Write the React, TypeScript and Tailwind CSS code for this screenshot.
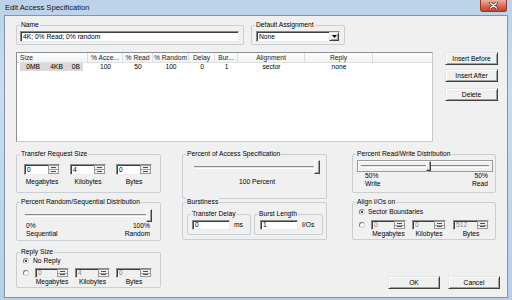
import React from "react";

function Group({ label, className, children }: { label: string; className?: string; children?: React.ReactNode }) {
  return (
    <div className={"border border-[#c9ced3] rounded-[2px] flex flex-col shrink-0 " + (className ?? "")}>
      <div className="-mt-[5px] ml-[3px] px-[1px] bg-[#f0f0f0] w-fit h-[8px] leading-[8px] whitespace-nowrap">{label}</div>
      {children}
    </div>
  );
}

const sunken =
  "border border-t-[#8a8a8a] border-l-[#8a8a8a] border-r-[#ececec] border-b-[#ececec] shadow-[inset_1px_1px_0_#404040]";
const raised =
  "bg-[#f0f0f0] border border-t-[#e6e6e6] border-l-[#e6e6e6] border-r-[#404040] border-b-[#404040] shadow-[inset_1px_1px_0_#ffffff,inset_-1px_-1px_0_#a0a0a0]";

function Spin({ value, className, disabled }: { value: string; className: string; disabled?: boolean }) {
  return (
    <div className={"flex items-stretch " + sunken + " " + (disabled ? "bg-[#f0f0f0] text-[#8a8a8a] " : "bg-white ") + className}>
      <div className="flex-1 pl-[2px] flex items-center leading-[8px]">{value}</div>
      <div className="w-[11px] flex flex-col border border-[#9a9a9a] bg-[#f0f0f0]">
        <div className="flex-1 flex items-center justify-center border-b border-[#9a9a9a]">
          <div className="w-[5px] h-[1px] bg-[#505050]" />
        </div>
        <div className="flex-1 flex items-center justify-center">
          <div className="w-[5px] h-[1px] bg-[#505050]" />
        </div>
      </div>
    </div>
  );
}

function Radio({ checked }: { checked?: boolean }) {
  return (
    <div className="w-[6px] h-[6px] rounded-full border border-[#7a7a7a] border-r-[#d0d0d0] border-b-[#d0d0d0] bg-white flex items-center justify-center shrink-0">
      {checked && <div className="w-[2px] h-[2px] rounded-full bg-black" />}
    </div>
  );
}

function Track({ className }: { className?: string }) {
  return <div className={"h-[3px] bg-[#e4e4e4] border-t border-b border-[#8a8a8a] border-b-white " + (className ?? "")} />;
}

function Thumb({ className }: { className: string }) {
  return (
    <div
      className={
        "shrink-0 bg-[#f0f0f0] border border-t-white border-l-white border-r-[#404040] border-b-[#404040] shadow-[inset_-1px_-1px_0_#a0a0a0] " +
        className
      }
    />
  );
}

function Btn({ children, className }: { children: React.ReactNode; className?: string }) {
  return (
    <div className={"flex items-center justify-center h-[13px] leading-[8px] " + raised + " " + (className ?? "")}>
      {children}
    </div>
  );
}

const headers: { t: string; w: string; left?: boolean }[] = [
  { t: "Size", w: "w-[71px]", left: true },
  { t: "% Acce...", w: "w-[35px]" },
  { t: "% Read", w: "w-[30px]" },
  { t: "% Random", w: "w-[36px]" },
  { t: "Delay", w: "w-[26px]" },
  { t: "Bur...", w: "w-[23px]" },
  { t: "Alignment", w: "w-[67px]" },
  { t: "Reply", w: "w-[68px]" },
];

export default function App() {
  return (
    <div className="w-[512px] h-[300px] overflow-hidden flex flex-col px-[4px] pb-[2px] bg-[linear-gradient(180deg,#bcd2ea_0%,#c9dcf0_30%,#b7cfe9_100%)] font-['Liberation_Sans',Arial,sans-serif] text-[6.7px] leading-[8px] text-black">
      {/* Title bar */}
      <div className="h-[15px] flex items-start shrink-0 -mx-[4px]">
        <div className="ml-[5px] mt-[3px] text-[7.6px] leading-[10px] text-[#111]">Edit Access Specification</div>
        <div className="ml-auto mr-[5px] w-[27px] h-[12px] rounded-b-[3px] border border-t-0 border-[#8c3a2c] bg-[linear-gradient(180deg,#eab0a2_0%,#d9715c_50%,#c4412a_100%)] flex items-center justify-center">
          <svg width="9" height="7" viewBox="0 0 9 7">
            <path d="M1.5 1 L7.5 6 M7.5 1 L1.5 6" stroke="#4b1b12" strokeWidth="2.6" strokeLinecap="round" />
            <path d="M1.5 1 L7.5 6 M7.5 1 L1.5 6" stroke="#ffffff" strokeWidth="1.4" strokeLinecap="round" />
          </svg>
        </div>
      </div>

      {/* Client */}
      <div className="flex-1 bg-[#f0f0f0] border border-[#7f94ad] flex flex-col pl-[11px]">
        {/* Row 1 */}
        <div className="flex mt-[9px]">
          <Group label="Name" className="w-[228px] h-[20px]">
            <div className={"ml-[3px] mt-[2px] w-[219px] h-[11px] bg-white flex items-center pl-[2px] " + sunken}>
              4K; 0% Read; 0% random
            </div>
          </Group>
          <Group label="Default Assignment" className="ml-[7px] w-[94px] h-[20px]">
            <div className={"ml-[4px] mt-[2px] w-[84px] h-[11px] bg-white flex items-center " + sunken}>
              <span className="flex-1 pl-[2px]">None</span>
              <div className={"w-[10px] h-[9px] flex items-center justify-center " + raised}>
                <svg width="5" height="3" viewBox="0 0 5 3">
                  <path d="M0 0h5L2.5 3z" fill="#000" />
                </svg>
              </div>
            </div>
          </Group>
        </div>

        {/* Row 2 */}
        <div className="flex mt-[7px]">
          <div className="w-[417px] h-[90px] bg-white border border-[#8a8f96] border-r-[#c8c8c8] border-b-[#c8c8c8] flex flex-col">
            <div className="flex h-[10px] border-b border-[#e0e0e0] bg-[linear-gradient(180deg,#ffffff,#f1f2f4)]">
              {headers.map((h) => (
                <div
                  key={h.t}
                  className={
                    h.w +
                    " border-r border-[#dcdcdc] flex items-center whitespace-nowrap overflow-hidden text-[#222] " +
                    (h.left ? "pl-[3px]" : "justify-center")
                  }
                >
                  {h.t}
                </div>
              ))}
              <div className="flex-1" />
            </div>
            <div className="flex h-[8px] items-center">
              <div className="w-[71px] flex">
                <div className="ml-[3px] w-[63px] h-[8px] bg-[#d9d9d9] flex items-center">
                  <span className="w-[20px] text-right">0MB</span>
                  <span className="w-[23px] text-right">4KB</span>
                  <span className="w-[17px] text-right">0B</span>
                </div>
              </div>
              <div className="w-[35px] text-center">100</div>
              <div className="w-[30px] text-center">50</div>
              <div className="w-[36px] text-center">100</div>
              <div className="w-[26px] text-center">0</div>
              <div className="w-[23px] text-center">1</div>
              <div className="w-[67px] text-center">sector</div>
              <div className="w-[68px] text-center">none</div>
            </div>
          </div>
          <div className="ml-[12px] w-[53px] flex flex-col">
            <Btn>Insert Before</Btn>
            <Btn className="mt-[4px]">Insert After</Btn>
            <Btn className="mt-[6px]">Delete</Btn>
          </div>
        </div>

        {/* Row 3 */}
        <div className="flex items-start mt-[12px]">
          {/* Column 1 */}
          <div className="w-[145px] flex flex-col">
            <Group label="Transfer Request Size" className="h-[39px]">
              <div className="flex ml-[7px] mt-[6px] gap-[10px]">
                {["0", "4", "0"].map((v, i) => (
                  <div key={i} className="w-[36px] flex flex-col items-center">
                    <Spin value={v} className="w-[36px] h-[11px]" />
                    <div className="mt-[3px] whitespace-nowrap">{["Megabytes", "Kilobytes", "Bytes"][i]}</div>
                  </div>
                ))}
              </div>
            </Group>
            <Group label="Percent Random/Sequential Distribution" className="mt-[9px] h-[39px]">
              <div className="ml-[8px] mt-[3px] w-[127px] h-[13px] flex items-center">
                <Track className="flex-1" />
                <Thumb className="w-[6px] h-[13px]" />
              </div>
              <div className="ml-[9px] w-[124px] flex justify-between">
                <div className="flex flex-col">
                  <span>0%</span>
                  <span>Sequential</span>
                </div>
                <div className="flex flex-col items-end">
                  <span>100%</span>
                  <span>Random</span>
                </div>
              </div>
            </Group>
            <Group label="Reply Size" className="mt-[11px] h-[36px]">
              <div className="ml-[6px] mt-[1px] h-[8px] flex items-center gap-[4px]">
                <Radio checked />
                <span>No Reply</span>
              </div>
              <div className="ml-[6px] mt-[3px] flex items-start">
                <div className="h-[10px] flex items-center">
                  <Radio />
                </div>
                <div className="ml-[6px] w-[34px] flex flex-col items-center">
                  <Spin value="0" disabled className="w-[34px] h-[10px]" />
                  <div className="whitespace-nowrap">Megabytes</div>
                </div>
                <div className="ml-[6px] w-[35px] flex flex-col items-center">
                  <Spin value="4" disabled className="w-[35px] h-[10px]" />
                  <div className="whitespace-nowrap">Kilobytes</div>
                </div>
                <div className="ml-[6px] w-[36px] flex flex-col items-center">
                  <Spin value="0" disabled className="w-[36px] h-[10px]" />
                  <div className="whitespace-nowrap">Bytes</div>
                </div>
              </div>
            </Group>
          </div>

          {/* Column 2 */}
          <div className="ml-[21px] w-[145px] flex flex-col">
            <Group label="Percent of Access Specification" className="h-[45px]">
              <div className="ml-[11px] mt-[2px] w-[126px] h-[14px] flex items-center">
                <Track className="flex-1" />
                <Thumb className="w-[6px] h-[14px]" />
              </div>
              <div className="ml-[11px] mt-[4px] w-[126px] text-center">100 Percent</div>
            </Group>
            <Group label="Burstiness" className="mt-[3px] h-[38px]">
              <div className="ml-[4px] mt-[8px] flex gap-[3px]">
                <Group label="Transfer Delay" className="w-[64px] h-[21px]">
                  <div className="mt-[2px] flex items-center">
                    <div className={"ml-[4px] w-[38px] h-[10px] bg-white flex items-center pl-[2px] " + sunken}>0</div>
                    <span className="ml-[4px]">ms</span>
                  </div>
                </Group>
                <Group label="Burst Length" className="w-[69px] h-[21px]">
                  <div className="mt-[2px] flex items-center">
                    <div className={"ml-[5px] w-[38px] h-[10px] bg-white flex items-center pl-[2px] " + sunken}>1</div>
                    <span className="ml-[4px]">I/Os</span>
                  </div>
                </Group>
              </div>
            </Group>
          </div>

          {/* Column 3 */}
          <div className="ml-[25px] w-[148px] flex flex-col">
            <Group label="Percent Read/Write Distribution" className="w-[144px] h-[39px]">
              <div className="ml-[4px] mt-[2px] w-[136px] h-[12px] border border-[#9a9a9a] shadow-[inset_1px_1px_0_#ffffff] flex items-center px-[3px]">
                <Track className="w-[65px]" />
                <Thumb className="w-[5px] h-[10px]" />
                <Track className="flex-1" />
              </div>
              <div className="ml-[12px] w-[123px] flex justify-between">
                <div className="flex flex-col">
                  <span>50%</span>
                  <span>Write</span>
                </div>
                <div className="flex flex-col items-end">
                  <span>50%</span>
                  <span>Read</span>
                </div>
              </div>
            </Group>
            <Group label="Align I/Os on" className="mt-[9px] w-[144px] h-[38px]">
              <div className="ml-[6px] mt-[2px] h-[8px] flex items-center gap-[3px]">
                <Radio checked />
                <span>Sector Boundaries</span>
              </div>
              <div className="ml-[6px] mt-[4px] flex items-start">
                <div className="h-[10px] flex items-center">
                  <Radio />
                </div>
                <div className="ml-[6px] w-[35px] flex flex-col items-center">
                  <Spin value="0" disabled className="w-[35px] h-[10px]" />
                  <div className="whitespace-nowrap">Megabytes</div>
                </div>
                <div className="ml-[6px] w-[34px] flex flex-col items-center">
                  <Spin value="0" disabled className="w-[34px] h-[10px]" />
                  <div className="whitespace-nowrap">Kilobytes</div>
                </div>
                <div className="ml-[7px] w-[36px] flex flex-col items-center">
                  <Spin value="512" disabled className="w-[36px] h-[10px]" />
                  <div className="whitespace-nowrap">Bytes</div>
                </div>
              </div>
            </Group>
            <div className="mt-[36px] flex justify-end gap-[8px]">
              <Btn className="w-[52px]">OK</Btn>
              <Btn className="w-[52px]">Cancel</Btn>
            </div>
          </div>
        </div>
      </div>
    </div>
  );
}
